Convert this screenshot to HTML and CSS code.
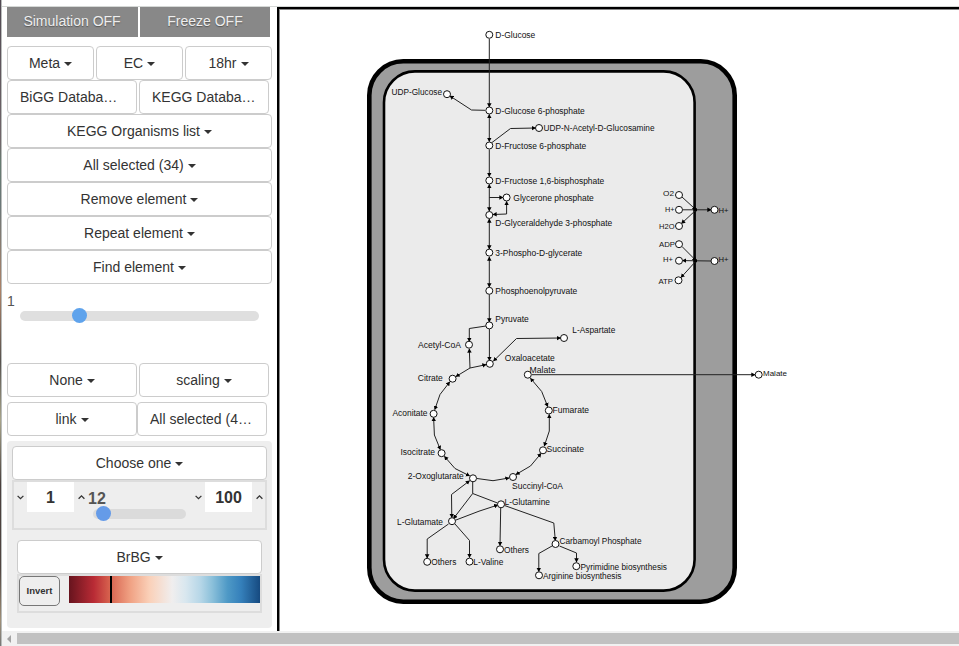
FILE: index.html
```html
<!DOCTYPE html>
<html lang="en">
<head>
<meta charset="utf-8">
<title>Metabolic map</title>
<link rel="stylesheet" href="styles.css">
</head>
<body>
<div class="edge"></div>
<div class="app">
  <main class="main">
    <aside class="sidebar">
      <div class="toggles"><button class="toggle on">Simulation OFF</button><button class="toggle">Freeze OFF</button></div>
      <div class="row three"><button class="btn caret">Meta</button><button class="btn caret">EC</button><button class="btn caret">18hr</button></div>
      <div class="row two"><button class="btn clipped">BiGG Databa…</button><button class="btn clipped">KEGG Databa…</button></div>
      <button class="btn caret">KEGG Organisms list</button>
      <button class="btn caret">All selected (34)</button>
      <button class="btn caret">Remove element</button>
      <button class="btn caret">Repeat element</button>
      <button class="btn caret">Find element</button>
      <div class="slider"><span class="value">1</span><div class="track"><i class="thumb"></i></div></div>
      <div class="row two"><button class="btn caret">None</button><button class="btn caret">scaling</button></div>
      <div class="row two joined"><button class="btn caret">link</button><button class="btn clipped">All selected (4…</button></div>
      <section class="panel">
        <button class="btn caret">Choose one</button>
        <div class="range">
          <span class="step"><svg class="chev" viewBox="0 0 7 5"><path d="M.6 .9 3.5 3.7 6.4 .9"/></svg></span>
          <span class="num">1</span>
          <span class="step raise"><svg class="chev" viewBox="0 0 7 5"><path d="M.6 3.7 3.5 .9 6.4 3.7"/></svg></span>
          <div class="mini"><b>12</b><div class="track small"><i class="thumb"></i></div></div>
          <span class="step"><svg class="chev" viewBox="0 0 7 5"><path d="M.6 .9 3.5 3.7 6.4 .9"/></svg></span>
          <span class="num">100</span>
          <span class="step last"><svg class="chev" viewBox="0 0 7 5"><path d="M.6 3.7 3.5 .9 6.4 3.7"/></svg></span>
        </div>
        <div class="palette">
          <button class="btn caret">BrBG</button>
          <div class="scale"><button class="invert">Invert</button><div class="ramp"><i class="mark"></i></div></div>
        </div>
      </section>
    </aside>
    <div class="canvas">
      <svg class="map" viewBox="280 10 679 621">
        <defs>
          <marker id="a" markerUnits="userSpaceOnUse" markerWidth="5" markerHeight="5" viewBox="0 0 6 6" refX="4.4" refY="3" orient="auto-start-reverse"><path d="M0 .3 5 3 0 5.7Z"/></marker>
        </defs>
        <rect class="outer" x="369.3" y="61.3" width="365.4" height="540.4" rx="34"/>
        <rect class="inner" x="384" y="71.4" width="310.6" height="519.2" rx="31"/>
        <g class="to">
          <path d="M489.3 39V107"/><path d="M485 110.3 471.5 110 450 96"/><path d="M492 142.5 510.5 128.5 535.5 128"/>
          <path d="M489.3 197.5H503"/><path d="M489.3 294.500V322"/><path d="M486 326 469.300 328.500V341.500"/><path d="M489.400 329V360.500"/>
          <path d="M532 374.700H755"/><path d="M472.700 482V493.500L453.500 518.500"/><path d="M455.500 520.200 479 511.200 497.800 505"/>
          <path d="M448.500 524 427.200 539V558"/><path d="M455 524 469.500 540.500V557.500"/><path d="M500.700 508 500 545.500"/>
          <path d="M504.500 505.500 553.800 523 555.300 540.500"/><path d="M552 546 538.800 553.500V571.500"/><path d="M559.500 546 576.500 553V562"/>
          <path d="M682 197 696 209.800"/><path d="M682.500 209.800H711"/><path d="M696 210 681.500 223.500"/>
          <path d="M682 246.500 696 260.600"/><path d="M711 261 682.500 260.600"/><path d="M696 261 681 277.500"/>
        </g>
        <path class="line" d="M472.700 493.500 497.500 503"/>
        <g class="both">
          <path d="M489.300 114.500V141.500"/><path class="head" d="M489.300 149.500V176.500"/><path d="M489.300 184.500V211"/><path d="M506.600 201.500V214L493 214.500"/>
          <path d="M489.300 219V249"/><path d="M489.300 257V287"/><path d="M493.500 361 516.500 338.500 560.500 338"/>
          <path d="M456 376.500 470 368 486 364.700"/><path d="M449.700 382 440 394.500 434.800 409.500"/><path d="M433.600 417.500 434.400 435 440.300 449.500"/>
          <path d="M444.500 456.500 455 468.500 469.500 475.800"/><path class="head" d="M477 478.500 493 480.700 509 478"/><path d="M516 474.500 530.500 466 541 453.500"/>
          <path d="M544.300 446 549.300 431V414.500"/><path d="M547.700 406.500 541.700 391.500 530.500 378.300"/><path d="M469.500 480.800 451.500 494.500 451.800 517.500"/>
        </g>
        <path class="up" d="M470 368 469.300 349"/>
        <path class="stub" d="M693.500 209.800H697M693.500 260.700H697"/>
        <g class="nodes">
          <circle cx="489.300" cy="34.800" r="3.500"/><circle cx="447" cy="94.200" r="3.500"/><circle cx="489.300" cy="110.500" r="3.500"/><circle cx="539" cy="128" r="3.500"/><circle cx="489.300" cy="145.500" r="3.500"/><circle cx="489.300" cy="180.500" r="3.500"/><circle cx="506.600" cy="197.500" r="3.500"/><circle cx="489.300" cy="215" r="3.500"/><circle cx="489.300" cy="252.600" r="3.500"/><circle cx="489.300" cy="290.800" r="3.500"/><circle cx="489.300" cy="325.400" r="3.500"/><circle cx="469" cy="344.700" r="3.500"/><circle cx="564" cy="338" r="3.500"/><circle cx="489.800" cy="363.800" r="3.500"/><circle cx="527.800" cy="374.700" r="3.500"/><circle cx="452.600" cy="378.700" r="3.500"/><circle cx="433.600" cy="413.800" r="3.500"/><circle cx="548.800" cy="410.500" r="3.500"/><circle cx="441.600" cy="453.200" r="3.500"/><circle cx="543" cy="450.300" r="3.500"/><circle cx="473" cy="478.300" r="3.500"/><circle cx="513" cy="477" r="3.500"/><circle cx="501" cy="504.300" r="3.500"/><circle cx="452" cy="521.200" r="3.500"/><circle cx="427.200" cy="561.800" r="3.500"/><circle cx="469.500" cy="561.600" r="3.500"/><circle cx="500" cy="549.300" r="3.500"/><circle cx="555.500" cy="544" r="3.500"/><circle cx="576.300" cy="566.200" r="3.500"/><circle cx="539" cy="575.300" r="3.500"/>
          <circle cx="679" cy="195" r="3.500"/><circle cx="679" cy="209.800" r="3.500"/><circle cx="679" cy="226" r="3.500"/><circle cx="679" cy="244.200" r="3.500"/><circle cx="679" cy="260.700" r="3.500"/><circle cx="678.500" cy="280.300" r="3.500"/><circle cx="714.500" cy="209.800" r="3.500"/><circle cx="714.500" cy="261" r="3.500"/><circle cx="758.700" cy="374.700" r="3.500"/>
        </g>
        <g class="labels">
          <text x="495.300" y="38" textLength="40">D-Glucose</text><text x="391.500" y="95" textLength="50.500">UDP-Glucose</text><text x="495.300" y="114" textLength="89.500">D-Glucose 6-phosphate</text><text x="543.500" y="131" textLength="111">UDP-N-Acetyl-D-Glucosamine</text><text x="495.300" y="149" textLength="91">D-Fructose 6-phosphate</text><text x="495.300" y="184" textLength="109">D-Fructose 1,6-bisphosphate</text><text x="513.300" y="201" textLength="80.500">Glycerone phosphate</text><text x="495.300" y="226" textLength="117">D-Glyceraldehyde 3-phosphate</text><text x="495.300" y="256" textLength="87">3-Phospho-D-glycerate</text><text x="495.300" y="294" textLength="82">Phosphoenolpyruvate</text><text x="495.300" y="322" textLength="33.500">Pyruvate</text><text x="572.300" y="333" textLength="43">L-Aspartate</text><text x="418" y="348" textLength="43">Acetyl-CoA</text><text x="504.800" y="361" textLength="50">Oxaloacetate</text><text x="529.500" y="373" textLength="26">Malate</text><text x="417.800" y="381" textLength="25">Citrate</text><text x="392.500" y="416" textLength="35">Aconitate</text><text x="552.500" y="413" textLength="36.500">Fumarate</text><text x="400.500" y="455" textLength="34.500">Isocitrate</text><text x="546.500" y="452" textLength="37.500">Succinate</text><text x="407.800" y="479" textLength="56">2-Oxoglutarate</text><text x="512" y="489" textLength="51">Succinyl-CoA</text><text x="504.500" y="505" textLength="45.500">L-Glutamine</text><text x="397" y="525" textLength="46">L-Glutamate</text><text x="431.300" y="565" textLength="25">Others</text><text x="473.300" y="565" textLength="30">L-Valine</text><text x="504" y="553" textLength="25">Others</text><text x="559.500" y="544" textLength="82">Carbamoyl Phosphate</text><text x="580.500" y="570" textLength="86.500">Pyrimidine biosynthesis</text><text x="543" y="579" textLength="78.500">Arginine biosynthesis</text>
        </g>
        <g class="labels tiny">
          <text x="663" y="196" textLength="11">O2</text><text x="665" y="212" textLength="9.500">H+</text><text x="659" y="229" textLength="15.500">H2O</text><text x="659" y="247" textLength="16">ADP</text><text x="663" y="262" textLength="10">H+</text><text x="658.500" y="284" textLength="14.500">ATP</text><text x="718.500" y="213" textLength="10">H+</text><text x="718.500" y="262" textLength="10">H+</text><text x="763" y="376" textLength="24">Malate</text>
        </g>
      </svg>
    </div>
  </main>
  <div class="scrollbar"><i class="arrow"></i><i class="handle"></i></div>
</div>
<script src="labels.js"></script>
</body>
</html>
```
FILE: labels.js
```js
// Condense each node label to its set width by scaling the glyphs.
document.querySelectorAll(".labels text").forEach(function (t) {
  t.setAttribute("lengthAdjust", "spacingAndGlyphs");
});
```
FILE: styles.css
```css
* { box-sizing: border-box; }
body { margin: 0; height: 646px; display: flex; overflow: hidden; background: #fff; font: 14px/20px "Liberation Sans", Arial, sans-serif; color: #333; }
button { font: inherit; color: inherit; margin: 0; padding: 0; }
.edge { width: 2px; flex: none; border-right: 1px solid #b9bcbb; background: linear-gradient(#514952 0, #71666a 22%, #667b70 25%, #6c7778 32%, #ad8267 45%, #56514e 56%, #a8a48a 65%, #493f3d 75%, #514541 88%, #a09078 96%, #777); }
.app { flex: 1; min-width: 0; display: flex; flex-direction: column; }
.main { flex: 1; min-height: 0; display: flex; margin-top: 6px; border-top: 1px solid #d5d8d6; }
.sidebar { width: 275px; flex: none; padding: 0 5px; display: flex; flex-direction: column; }
.toggles { display: flex; gap: 2px; margin-bottom: 9px; }
.toggle { width: 130px; height: 30px; border: 0; background: #888; color: #eee; text-shadow: 0 1px 1px #555; padding-bottom: 2px; }
.toggle.on { width: 131px; padding-right: 1px; }
.row { display: grid; gap: 2px; }
.three { grid-template-columns: repeat(3, 87px); }
.two { grid-template-columns: 130px 130px; }
.joined { gap: 0; margin: 5px 0; }
.btn { height: 34px; flex: none; border: 1px solid #ccc; border-radius: 4px; background: #fff; display: flex; align-items: center; justify-content: center; }
.clipped { justify-content: flex-start; padding-left: 12px; }
.caret::after { content: ""; margin-left: 4px; margin-top: 1px; border: 4px solid transparent; border-top-color: #333; border-bottom: 0; }
.slider { height: 79px; padding-top: 7px; display: flex; flex-direction: column; }
.value { color: #555; }
.track { width: 239px; height: 10px; margin-left: 13px; border-radius: 5px; background: #dfdfdf; display: flex; align-items: center; padding-left: 52px; }
.thumb { width: 15px; height: 15px; flex: none; margin-bottom: 1px; border-radius: 50%; background: #5fa3ec; }
.panel { height: 187px; padding: 5px; border-radius: 4px; background: #eee; display: flex; flex-direction: column; }
.panel > .btn, .range { width: 255px; }
.range { height: 50px; border: 2px solid #ddd; display: flex; align-items: flex-start; }
.step { width: 13px; height: 30px; flex: none; display: flex; align-items: center; padding-left: 3px; }
.step.raise { width: 14px; padding-left: 4px; }
.step.last { padding-left: 4px; }
.chev { width: 7px; height: 5px; fill: none; stroke: #333; stroke-width: 1.3; }
.num { width: 47px; height: 30px; background: #fff; flex: none; text-align: center; font: bold 16px/31px "Liberation Sans", Arial, sans-serif; }
.mini { flex: 1; height: 46px; color: #555; font-size: 16px; padding-top: 7px; }
.mini b { display: block; height: 20px; }
.small { width: 93px; margin-left: 5px; padding-left: 3px; background: #dbdbdb; }
.small .thumb { background: #659be8; }
.palette { width: 245px; margin: 10px 0 0 5px; }
.palette .btn { width: 245px; }
.scale { height: 39px; border: 2px solid #ddd; display: flex; justify-content: space-between; }
.invert { width: 41px; height: 30px; border: 1px solid #777; border-radius: 5px; background: #eee; font-size: 9.5px; font-weight: bold; }
.ramp { width: 191px; height: 27px; padding-left: 41px; background: linear-gradient(90deg, #67141e, #b92b35 13%, #d6604d 21%, #f0a183 32%, #fad0b8 42%, #f0eeee 54%, #d9e7ef 61%, #b5d6e7 69%, #8bc0da 75%, #4e99c6 83%, #3580bb 90%, #164a80); }
.mark { display: block; width: 2px; height: 27px; background: #000; }
.canvas { flex: 1; min-width: 0; border: solid #000; border-width: 2px 0 0 2px; }
.map { display: block; width: 680px; height: 622px; border: solid #888; border-width: 1px 0 0 1px; }
.outer { fill: #9d9d9d; stroke: #000; stroke-width: 4.6; }
.inner { fill: #ebebeb; stroke: #000; stroke-width: 2.6; }
.to path, .both path, .line, .up { fill: none; stroke: #222; stroke-width: 1; }
.to path, .both path, .up { marker-end: url(#a); }
.both path { marker-start: url(#a); }
.both .head { marker-start: none; }
.stub { stroke: #000; stroke-width: 3; }
.nodes circle { fill: #fff; stroke: #111; stroke-width: 1; }
.labels { font-size: 9.6px; fill: #111; }
.tiny { font-size: 7.6px; }
.scrollbar { height: 15px; flex: none; background: #f1f1f1; display: flex; align-items: center; padding-left: 5px; }
.arrow { border: 4px solid transparent; border-right-color: #a3a3a3; border-left: 0; margin-right: 6px; }
.handle { flex: 1; height: 11px; background: #c1c1c1; }
```
